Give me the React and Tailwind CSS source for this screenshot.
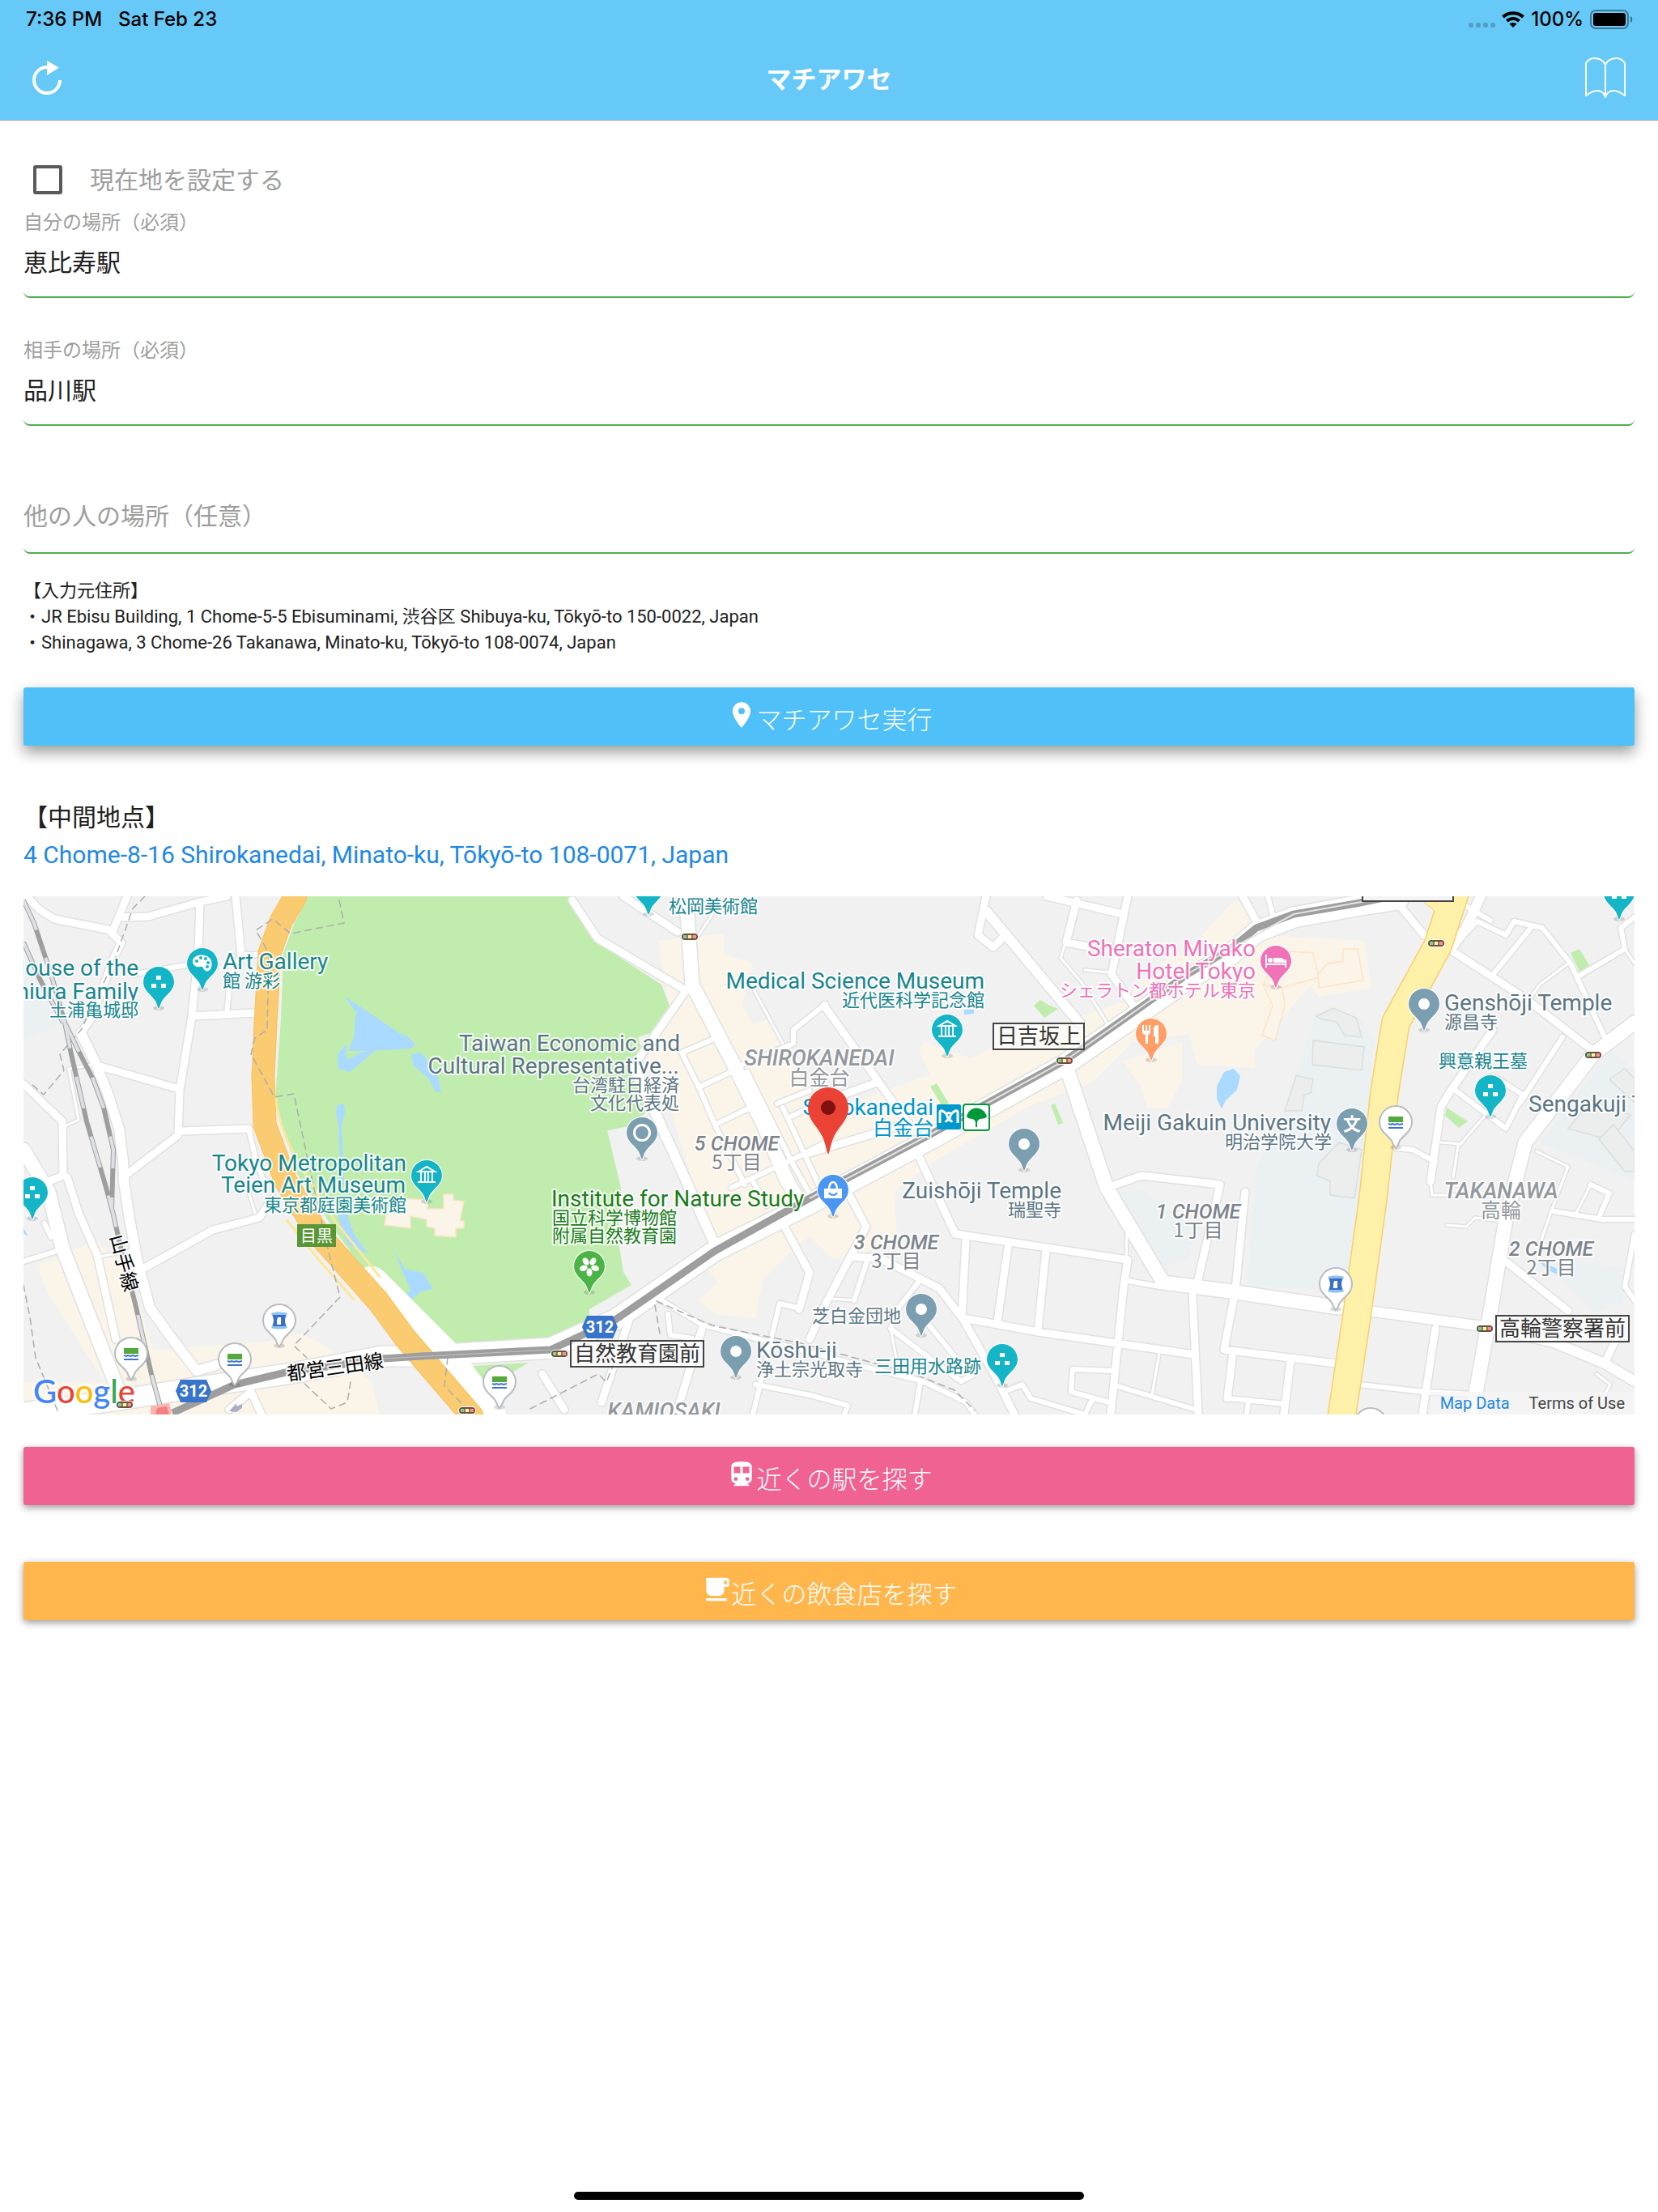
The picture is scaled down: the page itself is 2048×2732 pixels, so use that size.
import { useState } from 'react';
import { MdPlace, MdDirectionsSubway, MdFreeBreakfast } from 'react-icons/md';

// ---- map geometry ----

const LAND = {
  blue: [
    '0,74 30,110 51,156 0,178',
    '1597,143 1650,150 1668,180 1662,260 1635,486 1511,482 1522,339 1558,265 1593,156',
    '1354,365 1381,362 1448,412 1438,447 1401,460',
    '1960,191 1990,213 1990,352 1873,304',
    '1880,445 1985,460 1974,503 1940,515 1894,467',
  ],
  beige: [
    '16,456 90,425 130,460 160,560 300,550 345,540 380,560 430,600 440,640 0,640 0,600 100,600 30,490',
    '784,55 864,46 866,72 901,83 888,133 901,159 918,152 940,185 975,235 1010,260 1120,220 1106,190 1112,180 1170,200 1240,165 1300,150 1360,130 1400,85 1450,55 1491,10 1510,0 1530,30 1534,48 1656,55 1665,113 1600,124 1590,110 1520,190 1522,212 1450,208 1440,170 1370,180 1320,230 1240,260 1120,330 1075,365 1080,430 1000,448 971,420 948,438 914,473 904,521 854,516 833,499 858,477 841,456 854,443 801,269 770,200 798,135',
    '1358,204 1431,180 1431,226 1414,261 1388,261 1380,235',
  ],
  green: [
    '351,0 674,0 691,22 708,57 788,109 798,135 774,169 759,174 764,191 754,209 771,265 748,284 721,289 738,360 734,421 741,464 751,480 699,510 699,521 631,553 514,558 471,516 438,486 384,412 338,343 311,252 318,152 321,70 334,35',
    '538,581 624,576 564,611',
    '1248,135 1256,128 1266,134 1278,139 1261,150',
    '1120,235 1128,231 1143,256 1134,258',
    '1269,258 1274,256 1284,280 1278,282',
    '1911,70 1922,65 1935,87 1923,95',
    '1758,261 1784,278 1773,286 1756,271',
  ],
  water: [
    '396,123 484,182 478,188 430,191 401,191 408,174 411,143',
    '399,182 388,195 389,213 403,217 434,191 418,192 401,202 398,195',
    '471,169 484,185 471,187',
    '479,195 491,193 511,217 516,243 509,241 501,226 481,208',
    '388,257 396,257 397,267 393,282 396,352 392,352 389,282 386,268',
    '389,391 399,391 408,417 426,442 401,430 391,408',
    '458,438 471,460 494,465 506,485 491,488 474,503 472,495 478,486 468,463',
    '1162,140 1174,140 1174,145 1162,146',
    '1474,235 1483,217 1495,213 1503,222 1499,239 1485,252 1480,262 1474,250',
    '1873,451 1894,460 1894,467 1880,460',
    '0,410 6,420 0,416',
  ],
  building: [
    '1593,178 1656,186 1653,215 1592,208',
    '1597,148 1618,138 1646,150 1653,174 1632,172 1622,155 1604,152',
    '1572,221 1593,226 1590,243 1582,245 1579,265 1558,265 1565,243',
    '1600,330 1625,304 1653,313 1644,373 1614,369 1614,352 1598,345',
    '1908,287 1936,252 1985,270 1960,301',
    '1959,226 1978,213 1990,225 1990,255',
    '1946,300 1964,282 1990,315 1990,340 1978,340',
  ],
  peach: [
    '464,373 499,375 499,386 519,386 519,368 531,368 531,375 544,377 539,401 544,401 544,410 534,410 534,421 508,419 508,410 498,408 498,399 478,395 478,410 446,406 448,393',
    '1540,90 1565,68 1593,70 1600,100 1555,113 1532,109',
    '1599,96 1611,83 1630,80 1630,65 1648,65 1655,104 1600,113',
    '1531,109 1555,113 1558,135 1546,178 1530,172 1543,135',
  ],
};

const ROADS = {
  4: [
    'M51 284 68 276 56 213 84 208',
    'M94 445 141 436',
    'M278 365 286 391',
    'M851 22 834 48',
    'M903 117 938 182',
    'M1286 61 1281 76 1309 109 1338 156',
    'M1311 91 1341 94',
    'M1403 564 1394 616',
    'M1071 534 1080 580',
    'M1908 83 1873 109 1855 135',
    'M1751 304 1775 306 1807 269M1772 308 1766 347',
    'M1738 352 1740 369 1775 369',
    'M1869 315 1908 334 1887 389 1873 430',
    'M1758 406 1782 408 1793 397 1828 401',
    'M1918 391 1936 356',
    'M1978 65 1990 83',
    'M1943 590 1960 603 1940 640',
    'M998 497 1026 499',
    'M1363 417 1362 450',
  ],
  7: [
    'M138 96 201 85',
    'M269 72 288 72M258 74 251 146',
    'M278 287 286 321 296 350',
    'M0 451 48 436M26 404 34 421',
    'M813 193 853 176M813 193 834 235 854 282 891 356',
    'M834 236 874 217M854 282 898 261',
    'M878 212 951 182 951 165 991 133',
    'M894 217 948 326 974 373M938 261 964 317 984 360',
    'M874 360 948 326 991 304M901 352 918 382',
    'M931 256 971 240M944 274 971 261',
    'M781 495 838 529 991 568 1038 581 1111 599 1164 625 1175 640',
    'M796 516 799 542 826 546M934 503 955 508M934 503 901 640',
    'M904 603 971 616 1018 629 1014 640',
    'M1043 447 1026 499',
    'M1108 473 1081 508 1071 534 1158 599 1172 592',
    'M1118 529 1168 590M1108 599 1101 640',
    'M1211 612 1234 603 1244 620 1311 640',
    'M1344 586 1296 584 1294 612 1341 625M1311 640 1320 622',
    'M1351 605 1448 634M1364 475 1404 482',
    'M1779 48 1796 31 1831 48 1841 31 1876 39 1911 83 1953 174M1782 12 1812 30',
    'M1862 39 1814 98M1922 98 1978 65 1973 39 1990 26',
    'M1901 174 1848 256M1768 239 1831 287 1852 245 1815 222',
    'M1689 310 1716 313 1744 328M1890 389 1950 399 1990 399M1936 356 1959 367 1947 394',
    'M1487 620 1558 627M1649 603 1730 612 1790 615M1511 640 1513 624',
    'M1990 417 1978 482 1990 499M1537 0 1545 30',
  ],
  10: [
    'M4 0 19 16 38 28 108 42M128 0 109 46 121 57 112 75 84 150 71 169',
    'M118 26 154 25 218 7 251 0M218 7 216 70 208 148 201 191 193 239 191 295 128 343',
    'M262 0 269 72M208 148 286 144M91 209 189 237M196 290 278 287',
    'M144 462 234 412 291 397 308 373',
    'M0 232 48 278 49 345 31 352M54 347 68 391 91 443 114 547',
    'M281 612 254 634M281 612 294 640',
    'M678 5 709 52 816 115M741 0 808 44M818 117 754 209',
    'M989 135 1094 282M1054 230 985 255M971 317 1094 280',
    'M938 404 971 465 958 510M748 523 714 625M838 534 808 634M641 590 668 634',
    'M1189 0 1179 48 1198 63 1211 50M1301 5 1288 57 1314 62M1264 0 1358 22M1364 0 1344 96 1371 135',
    'M1018 365 1041 408 991 503 971 547M1104 317 1151 417 1364 449',
    'M1344 358 1381 345 1478 356 1451 473M1364 449 1359 482 1343 640',
    'M1164 425 1159 521M1216 434 1203 525M1263 438 1253 536M1161 521 1253 538 1446 566M1444 493 1451 640',
    'M1021 445 1058 447 1131 484 1161 523 1201 594 1224 640',
    'M1506 0 1523 31M1698 9 1730 48M1761 65 1855 126 1939 191',
    'M1815 165 1761 243 1751 260 1738 352M1831 451 1908 512',
    'M1509 365 1497 486 1483 560 1621 577M1494 564 1487 620M1565 573 1557 640M1744 534 1728 640M1967 547 1953 577',
  ],
  13: [
    'M71 169 88 204 104 243 118 287 123 326 124 352 131 399 141 451 156 508 184 547 214 586 238 579',
    'M754 209 854 430M1189 18 1304 156M1800 0 1782 39 1765 62',
    'M1661 512 1810 532 1890 551 1953 577 1990 599',
  ],
  18: [
    'M0 313 31 365 48 434 104 577 118 612',
    'M818 0 820 22 826 109 878 209 914 282 941 347 961 382',
    'M1289 213 1338 360 1408 477 1491 488 1625 508',
    'M1990 156 1939 195 1855 304 1831 399 1810 525 1789 640',
  ],
  26: [
    'M0 638 118 622 238 603 338 588 444 568 491 568 651 558 731 523 854 438 971 380 1124 298 1288 207 1438 103 1491 72 1523 44 1569 26 1646 12 1698 4',
  ],
};

const TRUNK = 'M336 0 318 31 304 70 299 156 296 222 298 282 324 352 364 417 438 500 471 545 554 642';
const HIGHWAY = 'M1768 -4 1747 61 1695 156 1681 243 1667 373 1646 525 1628 644';
const SUBWAY = 'M184 638 261 603 324 588 444 571 491 568 651 560 731 523 854 438 971 373 1124 292 1288 202 1438 96 1491 65 1523 39 1569 22 1646 9 1680 2';
const RAIL = [
  'M0 5 13 33 34 96 51 156 59 195 78 278 101 356 111 393 121 438 138 503 158 590 171 638',
  'M0 57 21 104 49 156',
  'M51 156 68 191 86 226 99 261 111 313 109 386',
];
const BORDERS = [
  'M150 0 135 15 112 80 71 165 45 195 50 215 25 245 10 232',
  'M390 5 396 33 330 46 308 28 287 42 303 70 301 165 286 175 281 195 310 248 334 244 350 320 372 420 391 495 334 555 350 570',
  'M404 600 400 625 380 633 345 600M0 480 8 520 15 570 42 635M524 570 520 605 545 630',
  'M782 500 850 530 960 552 1100 590 1150 610 1175 635M780 505 786 540M626 633 710 590 720 600 730 575',
];

const PINS = [
  { x: 167, y: 106, kind: 'ruins' },
  { x: 221, y: 83, kind: 'palette' },
  { x: 11, y: 366, kind: 'ruins' },
  { x: 498, y: 345, kind: 'museum' },
  { x: 772, y: -10, kind: 'museum' },
  { x: 764, y: 292, kind: 'ring' },
  { x: 699, y: 457, kind: 'flower' },
  { x: 880, y: 562, kind: 'dot' },
  { x: 1141, y: 165, kind: 'museum' },
  { x: 1393, y: 170, kind: 'food' },
  { x: 1236, y: 306, kind: 'dot' },
  { x: 1000, y: 363, kind: 'shop' },
  { x: 1109, y: 510, kind: 'dot' },
  { x: 1209, y: 572, kind: 'ruins' },
  { x: 1547, y: 80, kind: 'hotel' },
  { x: 1730, y: 133, kind: 'dot' },
  { x: 1641, y: 281, kind: 'school' },
  { x: 1812, y: 240, kind: 'ruins' },
  { x: 1971, y: -4, kind: 'ruins' },
];

const PIN_COLORS = {
  ruins: '#15b5c8',
  palette: '#15b5c8',
  museum: '#15b5c8',
  ring: '#7b9eb0',
  dot: '#7b9eb0',
  school: '#7b9eb0',
  flower: '#4ab544',
  food: '#ff9e67',
  shop: '#4b96f3',
  hotel: '#f073b7',
};

const STORES = [
  { x: 133, y: 565, kind: 'family' },
  { x: 261, y: 572, kind: 'family' },
  { x: 316, y: 524, kind: 'lawson' },
  { x: 588, y: 600, kind: 'family' },
  { x: 1695, y: 279, kind: 'family' },
  { x: 1621, y: 479, kind: 'lawson' },
  { x: 1664, y: 652, kind: 'family' },
];

const SIGNALS = [[125, 628], [823, 50], [662, 565], [548, 635], [1286, 203], [1745, 58], [1939, 196], [1805, 534]];

// [text, x, y, anchor]
const TEAL = '#17868f';
const SLATE = '#5b7684';
const PLACES = [
  { color: TEAL, en: [['House of the', 142, 98, 'end'], ['Tsuchiura Family', 142, 127, 'end']], ja: [['土浦亀城邸', 142, 148, 'end']] },
  { color: TEAL, en: [['Art Gallery', 246, 90]], ja: [['館 游彩', 246, 112]] },
  { color: TEAL, en: [['Tokyo Metropolitan', 473, 339, 'end'], ['Teien Art Museum', 472, 366, 'end']], ja: [['東京都庭園美術館', 473, 389, 'end']] },
  { color: TEAL, en: [], ja: [['松岡美術館', 797, 20]] },
  { color: SLATE, en: [['Taiwan Economic and', 811, 191, 'end'], ['Cultural Representative...', 810, 219, 'end']], ja: [['台湾駐日経済', 810, 241, 'end'], ['文化代表処', 810, 263, 'end']] },
  { color: TEAL, en: [['Medical Science Museum', 1187, 114, 'end']], ja: [['近代医科学記念館', 1187, 136, 'end']] },
  { color: '#1b7d1b', en: [['Institute for Nature Study', 652, 383]], ja: [['国立科学博物館', 653, 405], ['附属自然教育園', 653, 427]] },
  { color: SLATE, en: [['Kōshu-ji', 905, 570]], ja: [['浄土宗光取寺', 905, 592]] },
  { color: '#ee72b8', en: [['Sheraton Miyako', 1522, 74, 'end'], ['Hotel Tokyo', 1522, 102, 'end']], ja: [['シェラトン都ホテル東京', 1522, 124, 'end']] },
  { color: SLATE, en: [['Zuishōji Temple', 1282, 373, 'end']], ja: [['瑞聖寺', 1282, 395, 'end']] },
  { color: SLATE, en: [['Meiji Gakuin University', 1615, 289, 'end']], ja: [['明治学院大学', 1616, 311, 'end']] },
  { color: SLATE, en: [], ja: [['芝白金団地', 1084, 526, 'end']] },
  { color: TEAL, en: [], ja: [['三田用水路跡', 1183, 588, 'end']] },
  { color: SLATE, en: [['Genshōji Temple', 1755, 141]], ja: [['源昌寺', 1755, 163]] },
  { color: TEAL, en: [], ja: [['興意親王墓', 1748, 211]] },
  { color: SLATE, en: [['Sengakuji Temple', 1859, 266]], ja: [] },
];

const BLOCKS = [
  { en: '5 CHOME', ja: '5丁目', x: 881, y: 314 },
  { en: '3 CHOME', ja: '3丁目', x: 1078, y: 436 },
  { en: '1 CHOME', ja: '1丁目', x: 1451, y: 398 },
  { en: '2 CHOME', ja: '2丁目', x: 1887, y: 444 },
];

const TOWNS = [
  { en: 'SHIROKANEDAI', ja: '白金台', x: 983, y: 209 },
  { en: 'TAKANAWA', ja: '高輪', x: 1825, y: 373 },
  { en: 'KAMIOSAKI', ja: '上大崎', x: 791, y: 645 },
];

const CROSSINGS = [
  { name: '日吉坂上', x: 1197, y: 156, w: 114 },
  { name: '自然教育園前', x: 675, y: 548, w: 166 },
  { name: '高輪警察署前', x: 1818, y: 517, w: 166 },
];

const CJK = "font-['Noto_Sans_CJK_JP',sans-serif]";

function PinGlyph({ kind }) {
  switch (kind) {
    case 'ruins':
      return <path fill="#fff" d="M-3-8h6v5h-6zM-9 2h6v5h-6zM3 2h6v5h-6z" />;
    case 'museum':
      return (
        <g fill="none" stroke="#fff" strokeWidth="2">
          <path d="M-10-5 0-11 10-5ZM-11 8H11M-7-4V7M-2-4V7M2-4V7M7-4V7" />
        </g>
      );
    case 'palette':
      return (
        <g>
          <path fill="#fff" d="M-12-3C-11-13 8-13 11-3 13 5 9 11 4 9 0 7 2 3-3 4-8 5-12 2-12-3Z" />
          <g fill="#15b5c8">
            <circle cx="-7" cy="-3" r="2" />
            <circle cx="-2" cy="-7" r="2" />
            <circle cx="4" cy="-6" r="2" />
            <circle cx="7" cy="-1" r="2" />
            <circle cx="6" cy="4" r="2" />
          </g>
        </g>
      );
    case 'ring':
      return <circle r="9.5" fill="none" stroke="#fff" strokeWidth="3" />;
    case 'dot':
      return <circle r="7" fill="#fff" />;
    case 'flower':
      return (
        <g fill="#fff">
          {[36, 108, 180, 252, 324].map((a) => (
            <ellipse key={a} cy="-7.5" rx="3.5" ry="5" transform={`rotate(${a})`} />
          ))}
        </g>
      );
    case 'food':
      return <path fill="#fff" d="M-11-11h2v7h2v-7h2v7h2v-7h2v8c0 3-2 4-3 4V12h-3V1c-2 0-4-1-4-4ZM3-7c0-3 3-4 6-4V12H5V3H3Z" />;
    case 'shop':
      return (
        <g>
          <path fill="#fff" d="M-11-2H11V10H-11Z" />
          <path fill="none" stroke="#fff" strokeWidth="2.5" d="M-5-1C-5-13 5-13 5-1" />
          <path fill="none" stroke="#4b96f3" strokeWidth="2" d="M-5 3C-3 7 3 7 5 3" />
        </g>
      );
    case 'hotel':
      return (
        <g fill="#fff">
          <path d="M-13-8h2V3H11V-2h2V8h-2V5H-11V8h-2Z" />
          <circle cx="-7" cy="-1" r="3" />
          <path d="M-3 2V-4H5C9-4 11-2 11 2Z" />
        </g>
      );
    default:
      return (
        <text y="8" textAnchor="middle" fill="#fff" className={`text-[22px] font-bold ${CJK}`}>
          文
        </text>
      );
  }
}

function MapPin({ x, y, kind }) {
  return (
    <g transform={`translate(${x} ${y})`}>
      <ellipse cy="32" rx="7" ry="3" fill="#000" opacity=".14" />
      <path
        d="M0-19A19 19 0 0 1 19 0C19 10 10 15 5 22 2 26 2 30 0 33-2 30-2 26-5 22-10 15-19 10-19 0A19 19 0 0 1 0-19Z"
        fill={PIN_COLORS[kind]}
        stroke="#fff"
        strokeWidth="2"
        paintOrder="stroke"
      />
      <PinGlyph kind={kind} />
    </g>
  );
}

function StorePin({ x, y, kind }) {
  return (
    <g transform={`translate(${x} ${y})`}>
      <ellipse cy="31" rx="7" ry="3" fill="#000" opacity=".14" />
      <path
        d="M0-20A20 20 0 0 1 20 0C20 12 9 16 5 23 3 27 3 29 0 32-3 29-3 27-5 23-9 16-20 12-20 0A20 20 0 0 1 0-20Z"
        fill="#fff"
        stroke="#b9bcbf"
        strokeWidth="2"
      />
      {kind === 'family' ? (
        <g>
          <path fill="#55a83c" d="M-9-7H9V0H-9Z" />
          <path stroke="#3f73cf" strokeWidth="2" fill="none" d="M-9 2l3 1 2-1 3 1 3-1 3 1 4-1M-9 7H9" />
        </g>
      ) : (
        <g>
          <path fill="#8dc2ef" d="M-10-9C-5-11 5-11 10-9L8-4-8-4ZM-10 9C-5 11 5 11 10 9L8 4-8 4Z" />
          <path fill="#3a6fc7" d="M-8-7H8L7 0 8 7H-8L-7 0Z" />
          <path fill="#fff" d="M-2-4H2V5H-3V0Z" />
        </g>
      )}
    </g>
  );
}

function Signal({ x, y }) {
  return (
    <g transform={`translate(${x} ${y})`}>
      <rect x="-11" y="-5" width="22" height="10" rx="5" fill="#fff" />
      <rect x="-9" y="-3" width="18" height="6" rx="3" fill="#fff3a0" stroke="#6b4f40" strokeWidth="2" />
      <path fill="#7ccf98" d="M-8-2h4v4h-4z" />
      <path fill="#ff8f8f" d="M4-2h4v4H4z" />
      <path stroke="#6b4f40" strokeWidth="1.5" d="M-3-3V3M3-3V3" />
    </g>
  );
}

function RouteShield({ x, y }) {
  return (
    <g transform={`translate(${x} ${y})`}>
      <path d="M-22 0-16-14H16L22 0 16 14H-16Z" fill="#3874cb" />
      <text y="7" textAnchor="middle" fill="#fff" className="text-[20px] font-bold font-[Roboto,sans-serif]">
        312
      </text>
    </g>
  );
}

function StreetMap() {
  return (
    <svg viewBox="0 0 1990 640" preserveAspectRatio="xMidYMid slice" className="block h-[640px] w-full bg-[#f1f1f1]" role="img" aria-label="地図">
      {LAND.blue.map((p) => <polygon key={p} points={p} fill="#ebf0f3" />)}
      {LAND.beige.map((p) => <polygon key={p} points={p} fill="#fbf5e9" />)}
      {LAND.green.map((p) => <polygon key={p} points={p} fill="#c0edae" />)}
      {LAND.water.map((p) => <polygon key={p} points={p} fill="#aadaff" />)}
      {LAND.building.map((p) => <polygon key={p} points={p} fill="#eceeed" stroke="#dcdedd" strokeWidth="1.5" />)}
      {LAND.peach.map((p) => <polygon key={p} points={p} fill="#fbf4e8" stroke="#ffe3c6" strokeWidth="1.5" />)}

      {/* casings first so that crossings stay open */}
      <g fill="none" strokeLinejoin="round" strokeLinecap="round">
        {Object.entries(ROADS).map(([w, list]) => (
          <path key={w} d={list.join('')} stroke="#e1e1e1" strokeWidth={Number(w) + 2} />
        ))}
        <path d="M430 478 520 568 575 642" stroke="#fff" strokeWidth="42" />
        {Object.entries(ROADS).map(([w, list]) => (
          <path key={w} d={list.join('')} stroke="#fff" strokeWidth={Number(w) - 1} />
        ))}
        <path d={TRUNK} stroke="#f9c05c" strokeWidth="29" />
        <path d={TRUNK} stroke="#fbcb71" strokeWidth="27" />
        <path d="M312 250C316 300 350 345 384 400L440 470M325 400 370 455 408 498" stroke="#fde79b" strokeWidth="3" />
        <path d={HIGHWAY} stroke="#f8d06a" strokeWidth="36" />
        <path d="M1728 5 1745 20 1740 40 1770 10Z" fill="#fff0aa" stroke="#f8d06a" />
        <path d={HIGHWAY} stroke="#fff0aa" strokeWidth="33" />
        <path d={BORDERS.join('')} stroke="#adadad" strokeWidth="1.5" strokeDasharray="8 6" />
      </g>

      <g fill="none">
        <path d={SUBWAY} stroke="#9e9e9e" strokeWidth="9" />
        <path d="M971 373 1124 292 1288 202 1438 96 1491 65 1569 22 1680 2" stroke="#e3e3e3" strokeWidth="2" />
        <path d="M324 588 444 571 651 560" stroke="#c4c4c4" strokeWidth="1" />
        <path d={RAIL.join('')} stroke="#9e9e9e" strokeWidth="6" />
        <path d={RAIL.join('')} stroke="#dde0e4" strokeWidth="4" strokeDasharray="40 36" />
      </g>
      <path d="M157 630 180 626 183 640 157 640Z" fill="#fbb4b0" />
      <path d="M165 632 177 630 180 640 163 640Z" fill="#f58080" />
      <path d="M254 636 263 626 263 630 270 627 270 632 263 637Z" fill="#a9aec6" />

      <rect x="1654" y="-20" width="112" height="26" fill="#f4f4f4" stroke="#444" strokeWidth="2" />
      {CROSSINGS.map((c) => (
        <g key={c.name}>
          <rect x={c.x + 1} y={c.y + 1} width={c.w - 2} height="32" fill="#fff" fillOpacity=".6" stroke="#444" strokeWidth="2" />
          <text x={c.x + c.w / 2} y={c.y + 26} textAnchor="middle" fill="#333" className={`text-[26px] ${CJK}`}>
            {c.name}
          </text>
        </g>
      ))}

      <rect x="338" y="405" width="48" height="28" fill="#5a9636" />
      <text x="362" y="427" textAnchor="middle" fill="#fff" className={`text-[20px] ${CJK}`}>目黒</text>

      {STORES.map((s) => <StorePin key={`${s.x}-${s.y}`} {...s} />)}
      {PINS.map((p) => <MapPin key={`${p.x}-${p.y}`} {...p} />)}
      <RouteShield x={210} y={611} />
      <RouteShield x={712} y={532} />

      <g stroke="#fff" strokeOpacity=".85" strokeWidth="4" strokeLinejoin="round" paintOrder="stroke">
        {BLOCKS.map((a) => (
          <g key={a.en} fill="#7c848c" textAnchor="middle">
            <text x={a.x} y={a.y} className="text-[25px] font-medium italic font-[Roboto,sans-serif]">{a.en}</text>
            <text x={a.x} y={a.y + 23} className={`text-[24px] ${CJK}`}>{a.ja}</text>
          </g>
        ))}
        {TOWNS.map((a) => (
          <g key={a.en} fill="#92989d" textAnchor="middle">
            <text x={a.x} y={a.y} className="text-[27px] font-medium italic font-[Roboto,sans-serif]">{a.en}</text>
            <text x={a.x} y={a.y + 24} className={`text-[25px] ${CJK}`}>{a.ja}</text>
          </g>
        ))}
        {PLACES.map((p, i) => (
          <g key={i} fill={p.color}>
            {p.en.map(([t, x, y, anchor]) => (
              <text key={t} x={x} y={y} textAnchor={anchor} className="text-[28px] font-[Roboto,sans-serif]">{t}</text>
            ))}
            {p.ja.map(([t, x, y, anchor]) => (
              <text key={t} x={x} y={y} textAnchor={anchor} className={`text-[22px] ${CJK}`}>{t}</text>
            ))}
          </g>
        ))}
        <g fill="#0095cd" textAnchor="end">
          <text x="1124" y="270" className="text-[28px] font-[Roboto,sans-serif]">Shirokanedai</text>
          <text x="1124" y="295" className={`text-[25px] ${CJK}`}>白金台</text>
        </g>
        <g fill="#000" textAnchor="middle" className={`text-[24px] ${CJK}`}>
          <text transform="translate(116 455) rotate(75)">山手線</text>
          <text transform="translate(386 590) rotate(-8)">都営三田線</text>
        </g>
      </g>

      {/* station marks */}
      <rect x="1128" y="257" width="30" height="31" rx="2" fill="#0099cc" />
      <path
        d="M1132 282V269C1132 265 1137 267 1140 271 1142 274 1141 277 1143 277 1145 277 1144 274 1146 271 1149 267 1154 265 1154 269V282M1140 271C1142 269 1144 269 1146 271M1139 281C1141 277 1145 277 1147 281"
        transform="translate(0 -2)"
        fill="none"
        stroke="#fff"
        strokeWidth="3"
      />
      <rect x="1161" y="257" width="32" height="32" rx="3" fill="#fff" stroke="#00993a" strokeWidth="2" />
      <path d="M1165 272C1168 258 1186 258 1190 272 1186 277 1180 272 1178 279V285H1176V279C1174 272 1168 277 1165 272Z" fill="#00993a" />

      <path
        d="M994 236A25 25 0 0 1 1019 261C1019 277 1007 284 1001 297 997 306 997 312 994 319 991 312 991 306 987 297 981 284 969 277 969 261A25 25 0 0 1 994 236Z"
        fill="#ea4335"
      />
      <circle cx="994" cy="261" r="9" fill="#7f1010" />

      <text x="12" y="626" stroke="#fff" strokeWidth="6" strokeOpacity=".6" strokeLinejoin="round" paintOrder="stroke" className="text-[40px] font-medium font-[Lato,sans-serif]">
        <tspan fill="#4285f4">G</tspan>
        <tspan fill="#ea4335">o</tspan>
        <tspan fill="#fbbc05">o</tspan>
        <tspan fill="#4285f4">g</tspan>
        <tspan fill="#34a853">l</tspan>
        <tspan fill="#ea4335">e</tspan>
      </text>
      {SIGNALS.map(([x, y]) => <Signal key={`${x}-${y}`} x={x} y={y} />)}
    </svg>
  );
}

function StatusBar() {
  return (
    <div className="flex h-12 items-center justify-between pr-[30px] pl-8 text-2xl font-medium text-black font-[Inter,sans-serif]">
      <div className="flex gap-5">
        <span>7:36 PM</span>
        <span>Sat Feb 23</span>
      </div>
      <div className="flex items-center gap-2">
        <div className="mt-3.5 flex gap-[3px]">
          <span className="size-1.5 rounded-[2px] bg-black/20" />
          <span className="size-1.5 rounded-[2px] bg-black/20" />
          <span className="size-1.5 rounded-[2px] bg-black/20" />
          <span className="size-1.5 rounded-[2px] bg-black/20" />
        </div>
        <svg viewBox="0 0 28 20" className="h-5 w-7" fill="none" stroke="#000" strokeWidth="4">
          <path d="M1.5 7C8 0.5 20 0.5 26.500 7M6.500 12C10.500 8 17.500 8 21.500 12" />
          <path d="M14 20 9.500 15.500C12 13.500 16 13.500 18.500 15.500Z" fill="#000" stroke="none" />
        </svg>
        <span>100%</span>
        <svg viewBox="0 0 54 24" className="h-6 w-[54px]">
          <rect x="1" y="1" width="46" height="22" rx="6" fill="none" stroke="#000" strokeOpacity=".4" strokeWidth="2" />
          <rect x="4" y="4" width="40" height="16" rx="3" />
          <path d="M50 8C53 9 53 15 50 16Z" opacity=".45" />
        </svg>
      </div>
    </div>
  );
}

function Header({ onReset }) {
  return (
    <header className="border-b border-[#a8adb0] bg-[#67c9f8]">
      <StatusBar />
      <div className="grid h-[100px] grid-cols-[1fr_auto_1fr] items-center px-10 pb-1">
        <button type="button" onClick={onReset} aria-label="リロード" className="justify-self-start">
          <svg viewBox="0 0 36 44" className="h-11 w-9">
            <path d="M18 9A16 16 0 1 0 34 25" fill="none" stroke="#fff" strokeWidth="4" />
            <path d="M18 1 33 9.500 18 19Z" fill="#fff" />
          </svg>
        </button>
        <h1 className={`text-[31px] font-bold text-white ${CJK}`}>マチアワセ</h1>
        <button type="button" aria-label="使い方" className="justify-self-end">
          <svg viewBox="0 0 50 50" className="size-[50px]" fill="none" stroke="#fff" strokeWidth="2" strokeLinejoin="round">
            <path d="M25 9C22 2 15 1 11 1 7 1 3 4 1 7V47C5 44 9 41 15 41 20 41 23 43 25 49 27 43 30 41 35 41 41 41 45 44 49 47V7C47 4 43 1 39 1 35 1 28 2 25 9ZM25 9V49" />
          </svg>
        </button>
      </div>
    </header>
  );
}

const inputClass = `h-[89px] w-full rounded-[8px] border-b-2 border-[#4caf50] bg-transparent pb-0.5 text-[30px] text-[#212121] outline-none placeholder:text-[#9e9e9e] placeholder:opacity-100`;

function Field({ id, label, value, onChange }) {
  return (
    <div className="flex flex-col">
      <label htmlFor={id} className="-mb-2 pt-0.5 text-[24px] leading-6 text-[#9e9e9e]">{label}</label>
      <input id={id} type="text" value={value} onChange={(e) => onChange(e.target.value)} className={inputClass} />
    </div>
  );
}

function ActionButton({ className, icon, children }) {
  return (
    <button type="button" className={`flex h-[72px] w-full items-center justify-center rounded-[3px] text-[31px] font-light text-white ${className}`}>
      {icon}
      <span className="pt-2.5">{children}</span>
    </button>
  );
}

export default function App() {
  const [useCurrent, setUseCurrent] = useState(false);
  const [mine, setMine] = useState('恵比寿駅');
  const [partner, setPartner] = useState('品川駅');
  const [others, setOthers] = useState('');

  const reset = () => {
    setUseCurrent(false);
    setMine('');
    setPartner('');
    setOthers('');
  };

  return (
    <div className="flex min-h-screen flex-col bg-white text-[#212121] font-[Roboto,'Noto_Sans_CJK_JP',sans-serif]">
      <Header onReset={reset} />

      <main className="flex flex-col px-[29px] pt-[51px]">
        <div className="flex h-11 items-center gap-[34px] pl-3">
          <input
            id="current"
            type="checkbox"
            checked={useCurrent}
            onChange={(e) => setUseCurrent(e.target.checked)}
            className="size-9 appearance-none rounded-[3px] border-4 border-[#5a5a5a] checked:bg-[#5a5a5a]"
          />
          <label htmlFor="current" className="text-[30px] text-[#9e9e9e]">現在地を設定する</label>
        </div>

        <div className="mt-[17px] flex flex-col gap-[51px]">
          <Field id="mine" label="自分の場所（必須）" value={mine} onChange={setMine} />
          <Field id="partner" label="相手の場所（必須）" value={partner} onChange={setPartner} />
          <div className="pt-[18px]">
            <input
              type="text"
              aria-label="他の人の場所（任意）"
              placeholder="他の人の場所（任意）"
              value={others}
              onChange={(e) => setOthers(e.target.value)}
              className={`block ${inputClass}`}
            />
          </div>
        </div>

        <div className="mt-[30px] text-[22px] leading-8">
          <p>【入力元住所】</p>
          <p>・JR Ebisu Building, 1 Chome-5-5 Ebisuminami, 渋谷区 Shibuya-ku, Tōkyō-to 150-0022, Japan</p>
          <p>・Shinagawa, 3 Chome-26 Takanawa, Minato-ku, Tōkyō-to 108-0074, Japan</p>
        </div>

        <ActionButton className="mt-[39px] bg-[#4fc1f8] shadow-[0_8px_18px_rgba(0,0,0,0.4)]" icon={<MdPlace className="mb-1 size-[38px]" />}>
          マチアワセ実行
        </ActionButton>

        <div className="mt-[66px] text-[30px] leading-[46px]">
          <h2>【中間地点】</h2>
          <a href="#map" className="text-[#1e88e5]">4 Chome-8-16 Shirokanedai, Minato-ku, Tōkyō-to 108-0071, Japan</a>
        </div>

        <section id="map" className="relative mt-7 overflow-hidden">
          <StreetMap />
          <div className="absolute right-0 bottom-0 flex gap-6 bg-[#f5f5f5]/70 px-3 text-[20px] leading-7 text-[#444]">
            <a href="#map-data" className="text-[#1e88e5]">Map Data</a>
            <a href="#terms">Terms of Use</a>
          </div>
        </section>

        <div className="mt-10 flex flex-col gap-[70px]">
          <ActionButton className="bg-[#f06292] shadow-[0_3px_10px_rgba(0,0,0,0.4)]" icon={<MdDirectionsSubway className="mb-1 size-[38px]" />}>
            近くの駅を探す
          </ActionButton>
          <ActionButton className="bg-[#ffb74d] shadow-[0_3px_10px_rgba(0,0,0,0.4)]" icon={<MdFreeBreakfast className="mb-1 size-[38px]" />}>
            近くの飲食店を探す
          </ActionButton>
        </div>
      </main>

      <div className="mx-auto mt-auto mb-[15px] h-2.5 w-[630px] rounded-full bg-black" />
    </div>
  );
}
